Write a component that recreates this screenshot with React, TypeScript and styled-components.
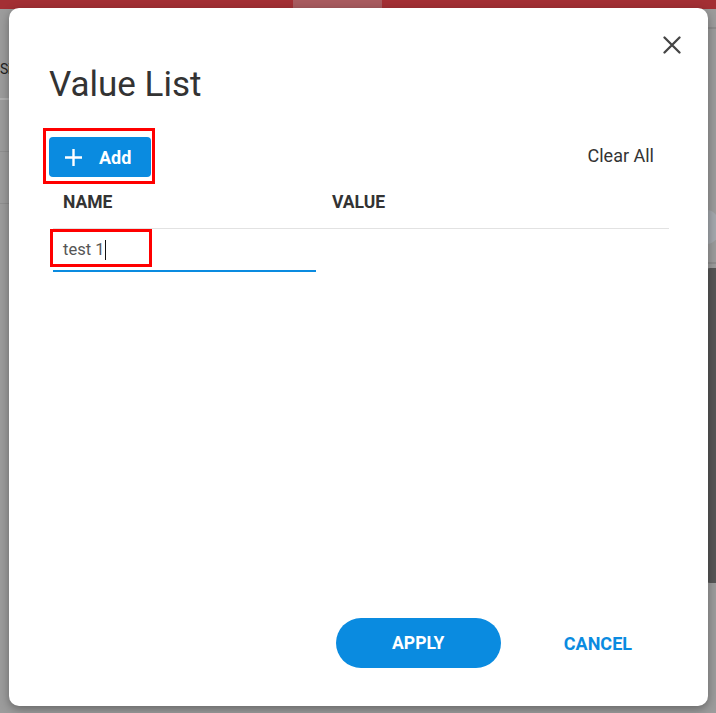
import React from 'react';
import styled, { createGlobalStyle } from 'styled-components';

const BLUE = '#0a8be0';

const GlobalStyle = createGlobalStyle`
  html, body {
    margin: 0;
    padding: 0;
  }

  body {
    font-family: Roboto, 'Liberation Sans', Arial, sans-serif;
  }

  * {
    box-sizing: border-box;
  }
`;

interface HighlightProps {
  $top: number;
  $left: number;
  $width: number;
  $height: number;
}

const App: React.FC = () => {
  return (
    <>
      <GlobalStyle />
      <StyledPage>
        <StyledTopBar>
          <StyledActiveTab />
        </StyledTopBar>
        <StyledBackdrop>
          <StyledLeftRail>
            <StyledRailRow $height={91} $line="#b0b0b0" $lineWidth={2}>
              <StyledRailText>Si</StyledRailText>
            </StyledRailRow>
            <StyledRailRow $height={52} $line="#8f8f8f" $lineWidth={1} />
            <StyledRailRow $height={52} $line="#8f8f8f" $lineWidth={1} />
          </StyledLeftRail>
          <StyledRightRail>
            <StyledRightLine />
            <StyledRightDot />
            <StyledRightBracket />
            <StyledKebab>
              <span />
              <span />
              <span />
            </StyledKebab>
            <StyledRightLine />
            <StyledDarkBlock />
          </StyledRightRail>
        </StyledBackdrop>

        <StyledDialog>
          <StyledCloseRow>
            <StyledCloseButton aria-label="close">
              <svg width="18" height="18" viewBox="0 0 18 18">
                <path
                  d="M1.5 1.5 L16.5 16.5 M16.5 1.5 L1.5 16.5"
                  stroke="currentColor"
                  strokeWidth="2.3"
                  strokeLinecap="round"
                />
              </svg>
            </StyledCloseButton>
          </StyledCloseRow>

          <StyledBody>
            <StyledTitle>Value List</StyledTitle>

            <StyledToolbar>
              <StyledMarked>
                <StyledAddButton>
                  <svg width="19" height="19" viewBox="0 0 19 19">
                    <path
                      d="M9.5 1 V18 M1 9.5 H18"
                      stroke="currentColor"
                      strokeWidth="2.4"
                    />
                  </svg>
                  Add
                </StyledAddButton>
                <StyledHighlight $top={-9} $left={-6} $width={112} $height={56} />
              </StyledMarked>
              <StyledClearButton>Clear All</StyledClearButton>
            </StyledToolbar>

            <StyledTable>
              <StyledHeaderRow>
                <StyledHeaderCell>NAME</StyledHeaderCell>
                <StyledHeaderCell>VALUE</StyledHeaderCell>
              </StyledHeaderRow>
              <StyledDataRow>
                <StyledNameField>
                  test 1
                  <StyledCaret />
                  <StyledHighlight $top={0} $left={-3} $width={102} $height={38} />
                </StyledNameField>
                <div />
              </StyledDataRow>
            </StyledTable>
          </StyledBody>

          <StyledFooter>
            <StyledApplyButton>APPLY</StyledApplyButton>
            <StyledCancelButton>CANCEL</StyledCancelButton>
          </StyledFooter>
        </StyledDialog>
      </StyledPage>
    </>
  );
};

const StyledPage = styled.div`
  position: relative;
  width: 716px;
  height: 713px;
  overflow: hidden;
  background: #9c9c9c;
  display: flex;
  flex-direction: column;
`;

const StyledTopBar = styled.div`
  height: 9px;
  flex-shrink: 0;
  display: flex;
  background: #a32f34;
`;

const StyledActiveTab = styled.div`
  margin-left: 293px;
  width: 89px;
  background: #a85b5f;
`;

const StyledBackdrop = styled.div`
  flex: 1;
  display: flex;
  justify-content: space-between;
`;

const StyledLeftRail = styled.div`
  width: 40px;
  display: flex;
  flex-direction: column;
`;

const StyledRailRow = styled.div<{ $height: number; $line: string; $lineWidth: number }>`
  height: ${(p) => p.$height}px;
  display: flex;
  align-items: flex-end;
  padding-bottom: 21px;
  border-bottom: ${(p) => p.$lineWidth}px solid ${(p) => p.$line};
`;

const StyledRailText = styled.span`
  font-size: 14px;
  letter-spacing: -0.5px;
  color: #222;
`;

const StyledRightRail = styled.div`
  width: 30px;
  display: flex;
  flex-direction: column;
  align-items: flex-end;
`;

const StyledRightLine = styled.div`
  width: 100%;
  height: 2px;
  margin-top: 18px;
  background: #8d8d8d;
`;

const StyledRightDot = styled.div`
  width: 2px;
  height: 2px;
  margin: 108px 16px 0 0;
  background: #333;
`;

const StyledRightBracket = styled.div`
  width: 6px;
  height: 20px;
  margin: 29px 13px 0 0;
  border: 2px solid #333;
  border-left: 0;
  border-radius: 0 3px 3px 0;
`;

const StyledKebab = styled.div`
  width: 26px;
  height: 34px;
  margin: 22px -4px 0 0;
  border-radius: 50%;
  background: #a4a8ad;
  display: flex;
  flex-direction: column;
  justify-content: center;
  padding-left: 6px;
  gap: 3px;

  span {
    width: 4px;
    height: 4px;
    background: #1565a8;
  }
`;

const StyledDarkBlock = styled.div`
  width: 12px;
  height: 315px;
  margin-top: 4px;
  border-radius: 6px 0 0 6px;
  background: #565656;
`;

const StyledDialog = styled.div`
  position: absolute;
  left: 9px;
  top: 8px;
  width: 699px;
  height: 698px;
  background: #fff;
  border-radius: 10px;
  box-shadow: 0 3px 10px rgba(0, 0, 0, 0.35);
  display: flex;
  flex-direction: column;
`;

const StyledCloseRow = styled.div`
  display: flex;
  justify-content: flex-end;
  padding: 17px 16px 0 0;
`;

const StyledCloseButton = styled.button`
  width: 40px;
  height: 40px;
  padding: 0;
  border: 0;
  background: none;
  color: #454545;
  display: flex;
  align-items: center;
  justify-content: center;
  cursor: pointer;
`;

const StyledBody = styled.div`
  flex: 1;
  padding: 0 39px 0 40px;
`;

const StyledTitle = styled.h1`
  margin: 0;
  font-size: 35px;
  font-weight: 400;
  line-height: 40px;
  color: #333;
`;

const StyledToolbar = styled.div`
  margin-top: 32px;
  display: flex;
  justify-content: space-between;
  align-items: center;
`;

const StyledMarked = styled.div`
  position: relative;
`;

const StyledHighlight = styled.span<HighlightProps>`
  position: absolute;
  top: ${(p) => p.$top}px;
  left: ${(p) => p.$left}px;
  width: ${(p) => p.$width}px;
  height: ${(p) => p.$height}px;
  border: 3px solid #ff0000;
  pointer-events: none;
`;

const StyledAddButton = styled.button`
  width: 102px;
  height: 40px;
  padding: 0 0 0 15px;
  border: 0;
  border-radius: 4px;
  background: ${BLUE};
  color: #fff;
  font-family: inherit;
  font-size: 18px;
  font-weight: 700;
  display: flex;
  align-items: center;
  gap: 16px;
  cursor: pointer;
`;

const StyledClearButton = styled.button`
  height: 36px;
  padding: 0 15px;
  margin-top: -3px;
  border: 0;
  background: none;
  color: #333;
  font-family: inherit;
  font-size: 18px;
  cursor: pointer;
`;

const StyledTable = styled.div`
  margin-left: 4px;
`;

const StyledHeaderRow = styled.div`
  display: grid;
  grid-template-columns: 269px 1fr;
  padding: 15px 0 16px;
  border-bottom: 1px solid #e2e2e2;
`;

const StyledHeaderCell = styled.div`
  padding-left: 10px;
  font-size: 17.5px;
  font-weight: 700;
  line-height: 20px;
  color: #333;
`;

const StyledDataRow = styled.div`
  display: grid;
  grid-template-columns: 269px 1fr;
`;

const StyledNameField = styled.div`
  position: relative;
  width: 263px;
  height: 43px;
  padding-left: 10px;
  border-bottom: 2px solid ${BLUE};
  display: flex;
  align-items: center;
  font-size: 16.5px;
  line-height: 20px;
  color: #555;
`;

const StyledCaret = styled.span`
  width: 1px;
  height: 20px;
  margin-left: 1px;
  background: #111;
`;

const StyledFooter = styled.div`
  display: flex;
  justify-content: flex-end;
  align-items: center;
  gap: 31px;
  padding: 0 44px 38px 0;
`;

const StyledApplyButton = styled.button`
  width: 165px;
  height: 50px;
  border: 0;
  border-radius: 25px;
  background: ${BLUE};
  color: #fff;
  font-family: inherit;
  font-size: 17.5px;
  font-weight: 700;
  cursor: pointer;
`;

const StyledCancelButton = styled.button`
  height: 50px;
  padding: 0 32px;
  border: 0;
  background: none;
  color: ${BLUE};
  font-family: inherit;
  font-size: 18px;
  font-weight: 700;
  cursor: pointer;
`;

export default App;
